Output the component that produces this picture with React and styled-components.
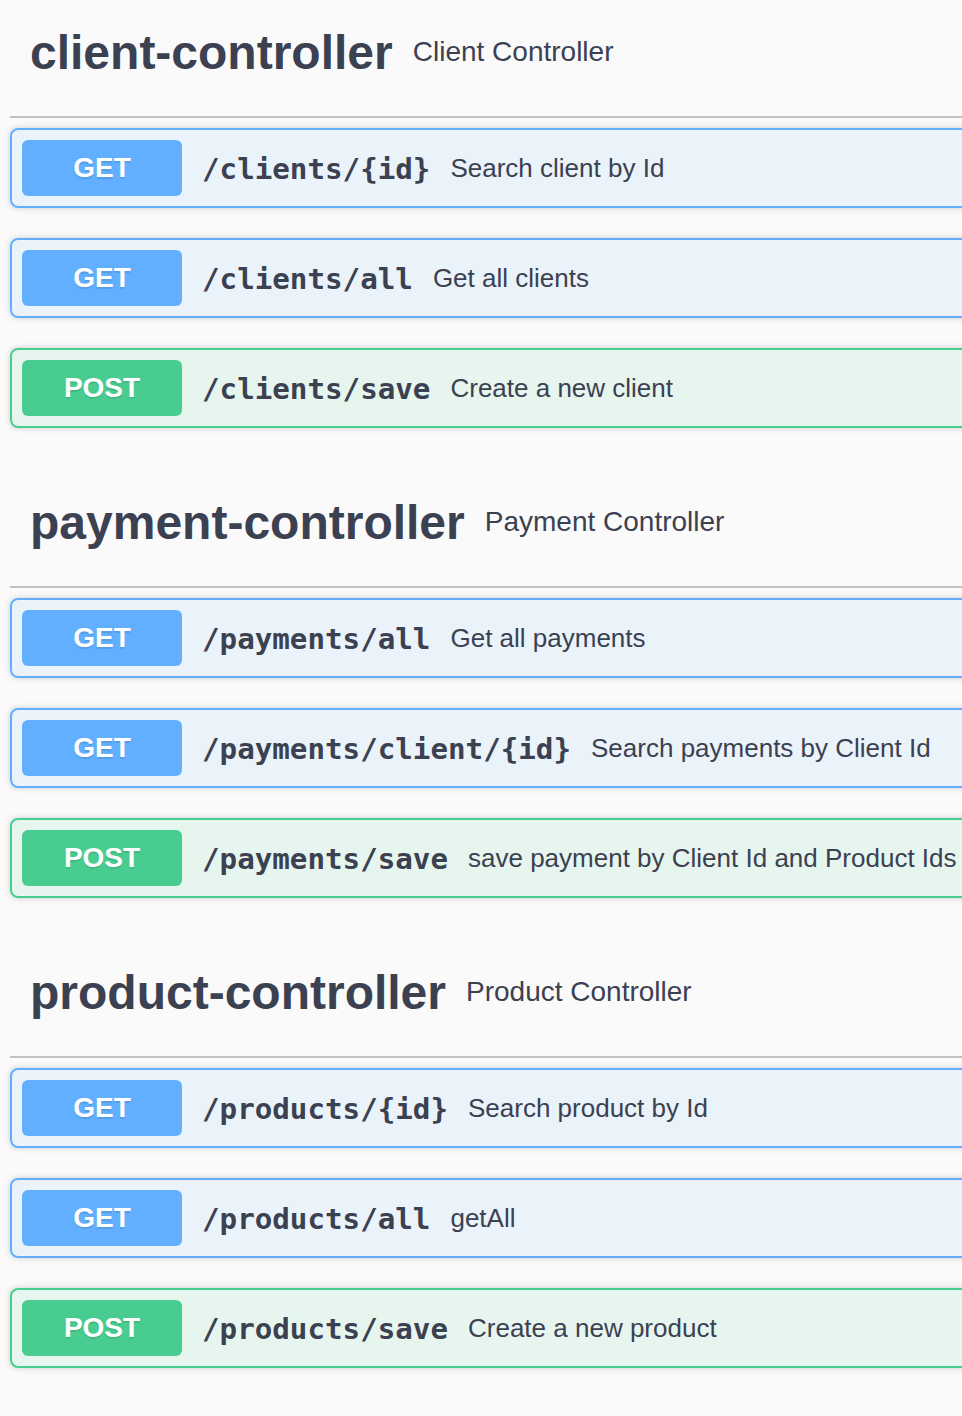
import React from "react";
import styled, { createGlobalStyle } from "styled-components";

const GlobalStyle = createGlobalStyle`
  html, body {
    margin: 0;
    padding: 0;
    background: #fafafa;
    overflow: hidden;
  }
  body {
    font-family: "Liberation Sans", Arial, sans-serif;
    color: #3b4151;
  }
`;

const METHOD_COLORS = {
  GET: { main: "#61affe", soft: "rgba(97, 175, 254, 0.1)" },
  POST: { main: "#49cc90", soft: "rgba(73, 204, 144, 0.1)" },
};

const Page = styled.div`
  width: 1120px;
  padding: 0 0 0 10px;
  display: flex;
  flex-direction: column;
`;

const Section = styled.section`
  display: flex;
  flex-direction: column;
`;

const TagHeader = styled.h3`
  display: flex;
  align-items: center;
  box-sizing: border-box;
  height: ${(p) => (p.$first ? 118 : 130)}px;
  margin: 0 0 10px;
  padding: ${(p) => (p.$first ? 8 : 20)}px 40px 20px 20px;
  border-bottom: 2px solid rgba(59, 65, 81, 0.3);
  font-family: "Liberation Sans", Arial, sans-serif;
  color: #3b4151;
`;

const TagName = styled.span`
  font-size: 48px;
  font-weight: 700;
  line-height: normal;
`;

const TagDescription = styled.small`
  flex: 1;
  padding: 0 20px;
  font-size: 28px;
  font-weight: 400;
  line-height: normal;
`;

const OpBlock = styled.div`
  margin: 0 0 30px;
  border: 2px solid ${(p) => METHOD_COLORS[p.$method].main};
  border-radius: 8px;
  background: ${(p) => METHOD_COLORS[p.$method].soft};
  box-shadow: 0 0 6px rgba(0, 0, 0, 0.19);
`;

const Summary = styled.div`
  display: flex;
  align-items: center;
  padding: 10px;
`;

const MethodBadge = styled.span`
  box-sizing: border-box;
  width: 160px;
  height: 56px;
  display: flex;
  align-items: center;
  justify-content: center;
  flex-shrink: 0;
  border-radius: 6px;
  background: ${(p) => METHOD_COLORS[p.$method].main};
  color: #fff;
  font-family: "Liberation Sans", Arial, sans-serif;
  font-size: 28px;
  font-weight: 700;
  text-shadow: 0 2px 0 rgba(0, 0, 0, 0.1);
`;

const Path = styled.span`
  padding: 1px 20px 0;
  font-family: "DejaVu Sans Mono", "Liberation Mono", monospace;
  font-size: 29.2px;
  font-weight: 700;
  color: #3b4151;
  white-space: nowrap;
`;

const Description = styled.span`
  flex: 1;
  font-family: "Liberation Sans", Arial, sans-serif;
  font-size: 26px;
  color: #3b4151;
  white-space: nowrap;
`;

const sections = [
  {
    name: "client-controller",
    description: "Client Controller",
    ops: [
      { method: "GET", path: "/clients/{id}", summary: "Search client by Id" },
      { method: "GET", path: "/clients/all", summary: "Get all clients" },
      { method: "POST", path: "/clients/save", summary: "Create a new client" },
    ],
  },
  {
    name: "payment-controller",
    description: "Payment Controller",
    ops: [
      { method: "GET", path: "/payments/all", summary: "Get all payments" },
      {
        method: "GET",
        path: "/payments/client/{id}",
        summary: "Search payments by Client Id",
      },
      {
        method: "POST",
        path: "/payments/save",
        summary: "save payment by Client Id and Product Ids",
      },
    ],
  },
  {
    name: "product-controller",
    description: "Product Controller",
    ops: [
      { method: "GET", path: "/products/{id}", summary: "Search product by Id" },
      { method: "GET", path: "/products/all", summary: "getAll" },
      { method: "POST", path: "/products/save", summary: "Create a new product" },
    ],
  },
];

export default function App() {
  return (
    <>
      <GlobalStyle />
      <Page>
        {sections.map((section, i) => (
          <Section key={section.name}>
            <TagHeader $first={i === 0}>
              <TagName>{section.name}</TagName>
              <TagDescription>{section.description}</TagDescription>
            </TagHeader>
            {section.ops.map((op) => (
              <OpBlock key={op.method + op.path} $method={op.method}>
                <Summary>
                  <MethodBadge $method={op.method}>{op.method}</MethodBadge>
                  <Path>{op.path}</Path>
                  <Description>{op.summary}</Description>
                </Summary>
              </OpBlock>
            ))}
          </Section>
        ))}
      </Page>
    </>
  );
}
